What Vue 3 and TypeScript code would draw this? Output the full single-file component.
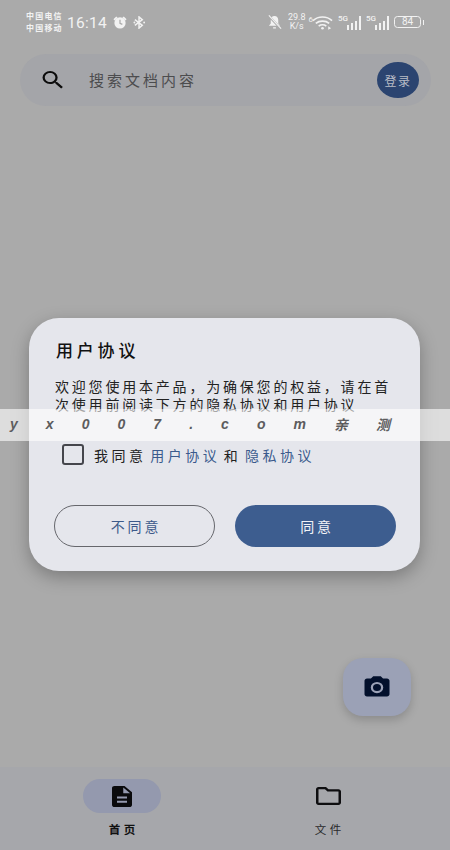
<script setup lang="ts">
const signals = [1, 2]
const watermark = ['y', 'x', '0', '0', '7', '.', 'c', 'o', 'm', '亲', '测']
</script>

<template>
  <div class="page">
    <div class="status-bar">
      <div class="carrier">
        <span>中国电信</span>
        <span>中国移动</span>
      </div>
      <span class="time">16:14</span>
      <svg class="st-alarm" viewBox="0 0 16 16" width="16" height="15">
        <path d="M1 4.500 4 1.500 5.500 2.800 2.300 5.800ZM15 4.500 12 1.500 10.500 2.800 13.700 5.800Z" fill="#f2f2f2" />
        <circle cx="8" cy="8.500" r="6" fill="#f2f2f2" />
        <path d="M8 5v3.800l2.500 1.200" stroke="#aaa" stroke-width="1.300" fill="none" />
      </svg>
      <svg class="st-bt" viewBox="0 0 14 14" width="13" height="13">
        <path d="M2 4l8 6-3.500 3V1L10 4l-8 6" stroke="#f2f2f2" stroke-width="1.600" fill="none" />
        <circle cx="1.500" cy="7" r="1" fill="#f2f2f2" />
        <circle cx="12" cy="7" r="1" fill="#f2f2f2" />
      </svg>
      <div class="spacer"></div>
      <svg class="st-bell" viewBox="0 0 16 16" width="15" height="16">
        <path d="M8 1.500c-2.700 0-4 2-4 4.500v3.500L2 12h12l-2-2.500V6c0-2.500-1.300-4.500-4-4.500ZM6.500 13.500h3V15h-3Z" fill="#f2f2f2" />
        <path d="M1.500 1 14.500 15" stroke="#aaa" stroke-width="2.400" />
        <path d="M2 1 15 15" stroke="#f2f2f2" stroke-width="1.200" />
      </svg>
      <div class="speed">
        <span>29.8</span>
        <span>K/s</span>
      </div>
      <div class="wifi">
        <span class="wifi-num">6</span>
        <svg viewBox="0 0 22 15" width="21" height="15">
          <path d="M1 5.500c5.500-5 14.500-5 20 0M4 8.500c3.700-3.200 10.300-3.200 14 0M7 11.300c2.200-1.700 5.800-1.700 8 0" stroke="#f2f2f2" stroke-width="1.700" fill="none" />
          <circle cx="11" cy="13.500" r="1.400" fill="#f2f2f2" />
          <path d="M17 11.500l3 2-3 1.500Z" fill="#f2f2f2" />
        </svg>
      </div>
      <div v-for="s in signals" :key="s" class="signal">
        <span class="five-g">5G</span>
        <div class="bars">
          <i class="b1"></i><i class="b2"></i><i class="b3"></i><i class="b4"></i>
        </div>
      </div>
      <div class="battery">
        <div class="battery-body">84</div>
        <div class="battery-tip"></div>
      </div>
    </div>

    <div class="search-bar">
      <svg class="search-icon" viewBox="0 0 24 24" width="28" height="24" preserveAspectRatio="none">
        <path d="M15.500 14h-.79l-.28-.27A6.470 6.470 0 0 0 16 9.500 6.500 6.500 0 1 0 9.500 16c1.610 0 3.090-.59 4.230-1.570l.27.28v.79l5 4.990L20.490 19l-4.990-5zm-6 0C7.010 14 5 11.990 5 9.500S7.010 5 9.500 5 14 7.010 14 9.500 11.990 14 9.500 14z" fill="#0c0c0c" />
      </svg>
      <span class="search-text">搜索文档内容</span>
      <div class="login">登录</div>
    </div>

    <div class="content">
      <div class="fab">
        <svg viewBox="0 0 24 24" width="30" height="27" preserveAspectRatio="none">
          <path d="M9 2 7.170 4H4c-1.100 0-2 .9-2 2v12c0 1.100.9 2 2 2h16c1.100 0 2-.9 2-2V6c0-1.100-.9-2-2-2h-3.170L15 2H9zm3 15a5 5 0 1 1 0-10 5 5 0 0 1 0 10z" fill="#03102c" />
          <circle cx="12" cy="12" r="3.200" fill="#03102c" />
        </svg>
      </div>
    </div>

    <nav class="bottom-nav">
      <div class="nav-item">
        <div class="nav-pill active">
          <svg viewBox="4 2 16 20" width="20" height="21" preserveAspectRatio="none">
            <path d="M14 2H6c-1.100 0-2 .9-2 2v16c0 1.100.9 2 2 2h12c1.100 0 2-.9 2-2V8l-6-6zm2 16H8v-2h8v2zm0-4H8v-2h8v2zm-3-5V3.500L18.500 9H13z" fill="#0a0a0c" />
          </svg>
        </div>
        <span class="nav-label bold">首页</span>
      </div>
      <div class="nav-item">
        <div class="nav-pill">
          <svg viewBox="2 4 20 16" width="25" height="18" preserveAspectRatio="none">
            <path d="M9.170 6l2 2H20v10H4V6h5.170M10 4H4c-1.100 0-2 .9-2 2v12c0 1.100.9 2 2 2h16c1.100 0 2-.9 2-2V8c0-1.100-.9-2-2-2h-8l-2-2z" fill="#0e0e10" />
          </svg>
        </div>
        <span class="nav-label">文件</span>
      </div>
    </nav>

    <div class="overlay">
      <div class="dialog">
        <h2>用户协议</h2>
        <p class="body-text">欢迎您使用本产品，为确保您的权益，请在首次使用前阅读下方的隐私协议和用户协议</p>
        <div class="agree-row">
          <span class="checkbox"></span>
          <span class="agree-text">我同意 <a>用户协议</a> 和 <a>隐私协议</a></span>
        </div>
        <div class="actions">
          <button class="btn outline">不同意</button>
          <button class="btn filled">同意</button>
        </div>
      </div>
    </div>

    <div class="watermark">
      <span v-for="(ch, i) in watermark" :key="i">{{ ch }}</span>
    </div>
  </div>
</template>

<style scoped>
.page {
  position: relative;
  width: 450px;
  height: 850px;
  overflow: hidden;
  display: flex;
  flex-direction: column;
  background: #aaaaaa;
  font-family: "Noto Sans CJK SC", "Liberation Sans", sans-serif;
}

.status-bar {
  height: 44px;
  flex-shrink: 0;
  display: flex;
  align-items: center;
  padding: 0 26px 0 26px;
  box-sizing: border-box;
  color: #f2f2f2;
}

.carrier {
  display: flex;
  flex-direction: column;
  font-size: 8px;
  line-height: 12px;
  font-weight: 700;
  letter-spacing: 1.200px;
  width: 37px;
  white-space: nowrap;
  margin-top: -1px;
}

.time {
  font-family: "Roboto", sans-serif;
  font-size: 15.500px;
  margin-left: 4px;
  margin-top: 1px;
  letter-spacing: 0.3px;
}

.st-alarm {
  margin-left: 5px;
}

.st-bt {
  margin-left: 5px;
}

.spacer {
  flex: 1;
}

.speed {
  display: flex;
  flex-direction: column;
  align-items: center;
  font-family: "Roboto", sans-serif;
  font-size: 9px;
  line-height: 9px;
  margin-left: 6px;
}

.wifi {
  display: flex;
  align-items: flex-start;
  margin-left: 3px;
}

.wifi-num {
  font-family: "Roboto", sans-serif;
  font-size: 8px;
  line-height: 9px;
  margin-right: -1px;
}

.signal {
  display: flex;
  align-items: flex-start;
  margin-left: 5px;
  position: relative;
  width: 23px;
  height: 15px;
}

.five-g {
  font-family: "Roboto", sans-serif;
  font-size: 8px;
  line-height: 8px;
  font-weight: 500;
}

.bars {
  position: absolute;
  right: 0;
  bottom: 0;
  display: flex;
  align-items: flex-end;
  gap: 2px;
}

.bars i {
  display: block;
  width: 2px;
  background: #f2f2f2;
}

.b1 { height: 5px; }
.b2 { height: 7px; }
.b3 { height: 9px; }
.b4 { height: 14px; }

.battery {
  display: flex;
  align-items: center;
  margin-left: 5px;
}

.battery-body {
  width: 27px;
  height: 12px;
  box-sizing: border-box;
  border: 1px solid #f2f2f2;
  border-radius: 3.5px;
  font-family: "Roboto", sans-serif;
  font-size: 10px;
  line-height: 10px;
  text-align: center;
}

.battery-tip {
  width: 1.5px;
  height: 5px;
  margin-left: 1.5px;
  background: #f2f2f2;
}

.search-bar {
  flex-shrink: 0;
  height: 52px;
  margin: 10px 19px 0 20px;
  padding: 0 12px 0 19px;
  display: flex;
  align-items: center;
  border-radius: 26px;
  background: #a4a5a9;
}

.search-text {
  margin: 0 0 2px 22px;
  flex: 1;
  font-size: 15px;
  letter-spacing: 3px;
  color: #4c4c4e;
}

.login {
  width: 42px;
  height: 36px;
  border-radius: 50%;
  background: #2b4470;
  color: #b9bcc6;
  font-size: 12px;
  letter-spacing: 1.500px;
  display: flex;
  align-items: center;
  justify-content: center;
}

.content {
  flex: 1;
  display: flex;
  justify-content: flex-end;
  align-items: flex-end;
  padding: 0 39px 51px 0;
}

.fab {
  width: 68px;
  height: 58px;
  border-radius: 20px;
  background: #9ba1b6;
  box-shadow: 0 4px 10px rgba(0, 0, 0, 0.18);
  display: flex;
  align-items: center;
  justify-content: center;
}

.bottom-nav {
  flex-shrink: 0;
  height: 83px;
  display: flex;
  padding: 12px 18px 0 19px;
  box-sizing: border-box;
  background: #a6a7ab;
}

.nav-item {
  width: 206px;
  display: flex;
  flex-direction: column;
  align-items: center;
}

.nav-pill {
  width: 78px;
  height: 34px;
  border-radius: 17px;
  display: flex;
  align-items: center;
  justify-content: center;
}

.nav-pill.active {
  background: #9499ae;
}

.nav-label {
  margin-top: 7px;
  padding-left: 3.500px;
  font-size: 11.500px;
  line-height: 18px;
  letter-spacing: 3.500px;
  color: #2a2a2c;
}

.nav-label.bold {
  font-weight: 700;
  color: #111;
}

.overlay {
  position: absolute;
  inset: 0;
  padding: 318px 30px 0 29px;
}

.dialog {
  height: 253px;
  box-sizing: border-box;
  padding: 20px 25px 0 27px;
  border-radius: 30px;
  background: #e5e6ec;
  box-shadow: 0 6px 18px rgba(0, 0, 0, 0.28);
}

h2 {
  margin: 0;
  font-size: 17px;
  line-height: 24px;
  font-weight: 500;
  letter-spacing: 3.800px;
  color: #111;
}

.body-text {
  margin: 15px -2px 0 -1px;
  font-size: 14px;
  line-height: 18px;
  letter-spacing: 2.800px;
  color: #222;
  height: 36px;
}

.agree-row {
  display: flex;
  align-items: center;
  margin: 31px 0 0 6px;
}

.checkbox {
  width: 22px;
  height: 21px;
  box-sizing: border-box;
  border: 2px solid #45464c;
  border-radius: 3px;
}

.agree-text {
  margin-left: 10px;
  font-size: 14px;
  letter-spacing: 3.500px;
  word-spacing: -3px;
  white-space: nowrap;
  color: #222;
}

.agree-text a {
  color: #3a5a8c;
}

.actions {
  display: flex;
  gap: 20px;
  margin: 40px 0 0 -2px;
}

.btn {
  flex-shrink: 0;
  width: 161px;
  height: 42px;
  padding: 0 0 0 3px;
  border-radius: 21px;
  box-sizing: border-box;
  font-family: inherit;
  font-size: 14px;
  letter-spacing: 2.800px;
}

.outline {
  background: transparent;
  border: 1px solid #66676c;
  color: #3d5a8a;
}

.filled {
  background: #3d5d8f;
  border: none;
  color: #f2f3f7;
}

.watermark {
  position: absolute;
  left: 0;
  right: 0;
  top: 409px;
  height: 32px;
  padding: 0 60px 2px 10px;
  box-sizing: border-box;
  display: flex;
  justify-content: space-between;
  align-items: center;
  background: rgba(255, 255, 255, 0.6);
  font-family: "Liberation Sans", "Noto Sans CJK SC", sans-serif;
  font-size: 14px;
  font-style: italic;
  font-weight: 700;
  color: #5c5c5e;
}
</style>
